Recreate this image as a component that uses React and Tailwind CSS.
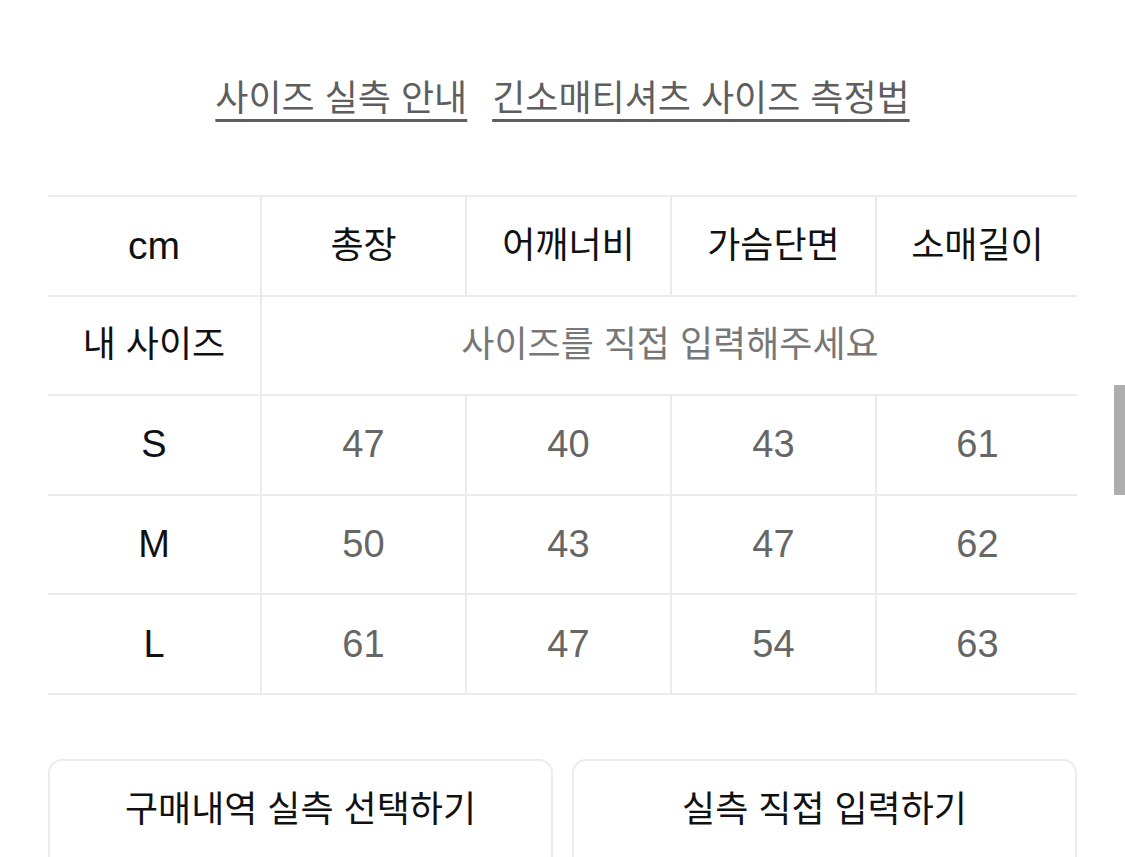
import React from 'react';

const font = { fontFamily: '"Liberation Sans", "Noto Sans CJK KR", sans-serif' };

const columns = ['총장', '어깨너비', '가슴단면', '소매길이'];

const sizes = [
  { label: 'S', values: [47, 40, 43, 61] },
  { label: 'M', values: [50, 43, 47, 62] },
  { label: 'L', values: [61, 47, 54, 63] },
];

const Cell = ({ children, first, className = '' }) => (
  <div
    className={`h-[97.6px] flex items-center justify-center ${first ? '' : 'border-l-2 border-[#ebebeb]'} ${className}`}
  >
    {children}
  </div>
);

export default function App() {
  return (
    <div className="relative min-h-screen bg-white overflow-hidden" style={font}>
      <div className="px-[48px]">
        {/* links */}
        <div className="pt-[75px] h-[195px] flex justify-center gap-[25px] text-[36px] leading-[48px] text-[#5e5e5e]">
          <span className="underline decoration-[3px] underline-offset-[8px]">사이즈 실측 안내</span>
          <span className="underline decoration-[3px] underline-offset-[8px]">긴소매티셔츠 사이즈 측정법</span>
        </div>

        {/* size table */}
        <div className="border-t-2 border-[#ebebeb]">
          <div className="grid grid-cols-[212px_205px_205px_205px_203px] border-b-2 border-[#ebebeb]">
            <Cell first className="text-[39px] text-[#111]">cm</Cell>
            {columns.map((c) => (
              <Cell key={c} className="text-[36px] text-[#111]">{c}</Cell>
            ))}
          </div>
          <div className="grid grid-cols-[212px_818px] border-b-2 border-[#ebebeb]">
            <Cell first className="text-[36px] text-[#111]">내 사이즈</Cell>
            <Cell className="text-[36px] text-[#777]">사이즈를 직접 입력해주세요</Cell>
          </div>
          {sizes.map((s) => (
            <div key={s.label} className="grid grid-cols-[212px_205px_205px_205px_203px] border-b-2 border-[#ebebeb]">
              <Cell first className="text-[38px] text-[#111]">{s.label}</Cell>
              {s.values.map((v, i) => (
                <Cell key={i} className="text-[38px] text-[#666]">{v}</Cell>
              ))}
            </div>
          ))}
        </div>

        {/* buttons */}
        <div className="mt-[64px] grid grid-cols-2 gap-[19px]">
          <button className="h-[120px] rounded-[14px] border-2 border-[#ececec] bg-white pb-[18px] text-[36px] text-[#111]">
            구매내역 실측 선택하기
          </button>
          <button className="h-[120px] rounded-[14px] border-2 border-[#ececec] bg-white pb-[18px] text-[36px] text-[#111]">
            실측 직접 입력하기
          </button>
        </div>
      </div>

      {/* scrollbar thumb */}
      <div className="absolute right-0 top-[385px] w-[11px] h-[110px] bg-[#adadad]" />
    </div>
  );
}
